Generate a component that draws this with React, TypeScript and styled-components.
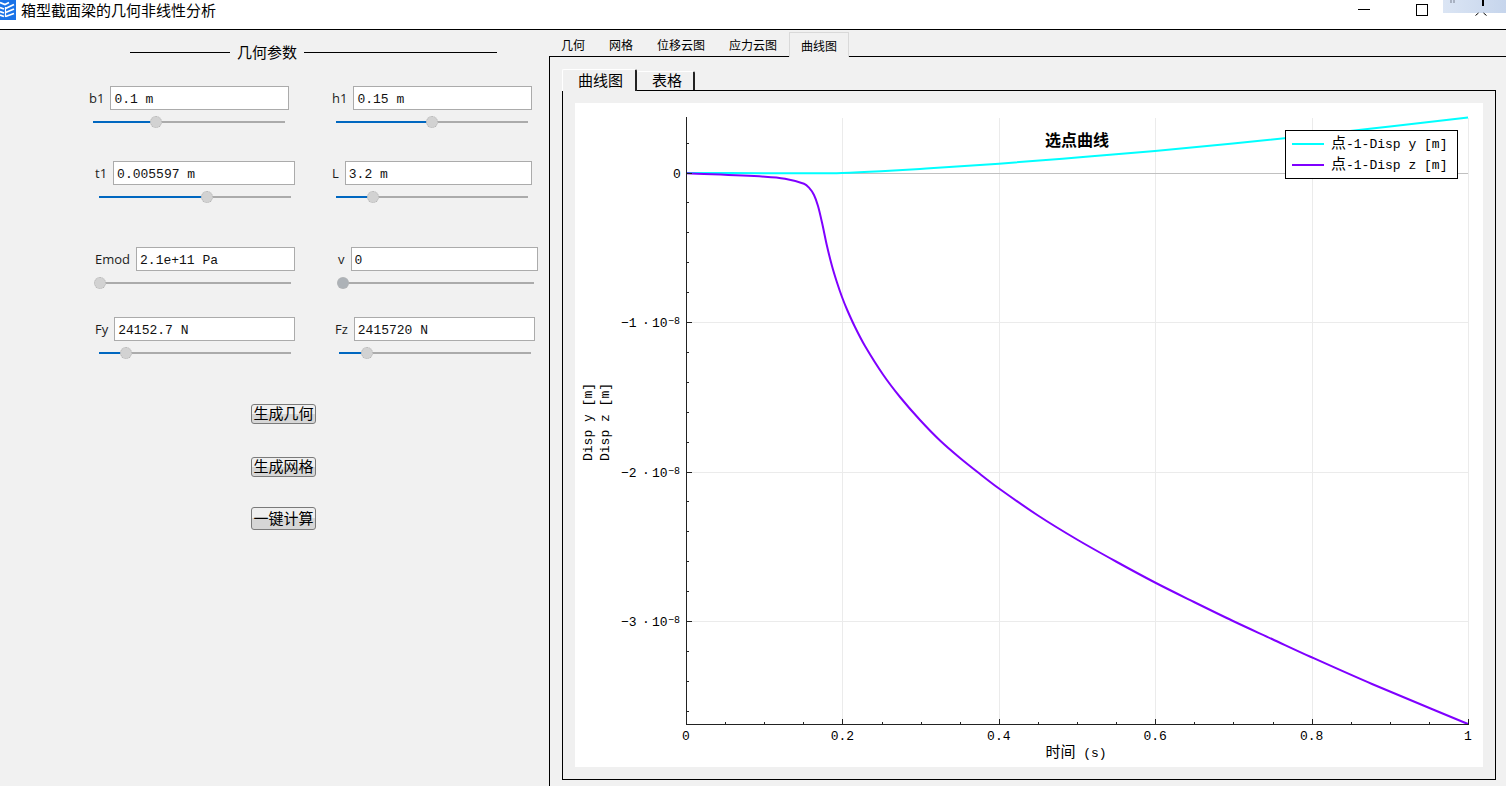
import React, { useState } from 'react';
import styled, { createGlobalStyle, css } from 'styled-components';

const CJK = '"Noto Sans CJK SC", sans-serif';
const MONO = '"Liberation Mono", "Noto Sans CJK SC", monospace';

const GlobalStyle = createGlobalStyle`
  *, *::before, *::after { box-sizing: border-box; }
  body { margin: 0; background: #f1f1f1; color: #000; font-family: ${CJK}; font-size: 15px; }
  button { font: inherit; color: inherit; }
`;

const Window = styled.div`
  min-height: 100vh;
  display: flex;
  flex-direction: column;
`;

const TitleBar = styled.header`
  height: 30px;
  flex: none;
  display: flex;
  align-items: flex-start;
  background: #fff;
  border-bottom: 1px solid #000;
`;

const Logo = styled.svg`
  display: block;
  width: 16px;
  height: 20px;
`;

const Title = styled.h1`
  margin: 0 auto 0 5px;
  font-size: 15px;
  line-height: 20px;
  font-weight: 400;
`;

const WindowButton = styled.button<{ $wide?: boolean; $spaced?: boolean }>`
  width: ${(p) => (p.$wide ? 63 : 42)}px;
  height: 20px;
  margin: ${(p) => (p.$spaced ? '0 16px 0 0' : '0')};
  padding: 0;
  border: 0;
  background: none;
  display: flex;
  justify-content: center;
`;

const Body = styled.div`
  flex: 1;
  display: grid;
  grid-template-columns: 549px minmax(0, 1fr);
`;

const ParameterPane = styled.section`
  padding-top: 12px;
`;

const GroupTitle = styled.h2`
  margin: 0 52px 24px 130px;
  display: flex;
  align-items: center;
  gap: 7px;
  font-size: 15px;
  line-height: 20px;
  font-weight: 400;

  &::before, &::after {
    content: '';
    height: 1px;
    background: #000;
  }
  &::before { width: 100px; }
  &::after { flex: 1; }
`;

const FieldRow = styled.div<{ $start: number; $gap: number; $after: number }>`
  display: flex;
  padding-left: ${(p) => p.$start}px;
  gap: ${(p) => p.$gap}px;
  margin-bottom: ${(p) => p.$after}px;
`;

const Field = styled.div`
  width: 200px;
`;

const FieldLine = styled.div`
  display: flex;
  align-items: center;
  gap: 6px;
  height: 24px;
  margin-bottom: 6px;
`;

const FieldLabel = styled.label`
  font-family: "Open Sans", sans-serif;
  font-size: 13px;
  line-height: 24px;
  color: #1c1c1c;
`;

const ValueInput = styled.input`
  flex: 1;
  min-width: 0;
  height: 24px;
  padding: 2px 3px 0;
  border: 1px solid #ababab;
  border-radius: 0;
  background: #fff;
  color: #111;
  font-family: ${MONO};
  font-size: 13px;
  outline: 0;
`;

const thumb = css<{ $thumb: string }>`
  appearance: none;
  width: 12px;
  height: 12px;
  border: 1px dotted #b4b4b4;
  border-radius: 50%;
  background: ${(p) => p.$thumb};
`;

const Slider = styled.input<{ $thumb: string }>`
  appearance: none;
  display: block;
  width: calc(100% + 4px);
  height: 12px;
  margin: 0 -2px;
  background:
    linear-gradient(#0067c0, #0067c0) 6px 5px / calc((100% - 12px) * var(--fill)) 2px no-repeat,
    linear-gradient(#ababab, #ababab) 6px 5px / calc(100% - 12px) 2px no-repeat;

  &::-webkit-slider-thumb { ${thumb} }
`;

const Actions = styled.div`
  display: flex;
  flex-direction: column;
  align-items: flex-start;
  padding-left: 251px;
`;

const ActionButton = styled.button<{ $tall?: boolean; $after?: number }>`
  width: 65px;
  height: ${(p) => (p.$tall ? 23 : 20)}px;
  margin: 0 0 ${(p) => p.$after ?? 0}px;
  padding: 0 1px 2px;
  border: 1px solid #7a7a7a;
  border-radius: 3px;
  background: linear-gradient(#efefef 0 50%, #d6d6d6 50% 100%);
  font-size: 15px;
  line-height: 16px;
  white-space: nowrap;
`;

const ResultPane = styled.section`
  display: flex;
  flex-direction: column;
  min-width: 0;
`;

const ViewTabs = styled.div`
  display: flex;
  align-items: flex-end;
  height: 26px;
`;

const ViewTab = styled.button<{ $active?: boolean }>`
  height: 24px;
  padding: 1px 12px 0;
  border: 0 solid #d9d9d9;
  background: #f1f1f1;
  font-size: 12px;
  line-height: 23px;
  ${(p) => p.$active && css`
    height: 25px;
    margin-bottom: -1px;
    padding: 0 11px;
    border-width: 1px 1px 0;
    position: relative;
  `}
`;

const ViewFrame = styled.div`
  flex: 1;
  padding: 12px 10px 6px 12px;
  border: 1px solid #000;
  border-width: 1px 0 0 1px;
`;

const PlotTabs = styled.div`
  display: flex;
  align-items: flex-end;
  height: 21px;
`;

const PlotTab = styled.button<{ $active?: boolean }>`
  height: 19px;
  padding: 0 11px 2px 15px;
  border: 1px solid #fff;
  border-left-width: 0;
  border-right: 2px solid #222;
  border-bottom: 0;
  border-radius: 2px 2px 0 0;
  background: #f0f0f0;
  font-size: 15px;
  line-height: 16px;
  ${(p) => p.$active && css`
    height: 22px;
    margin-bottom: -1px;
    padding: 0 12px 2px 15px;
    border-left-width: 1px;
    position: relative;
  `}
`;

const PlotFrame = styled.div`
  padding: 12px;
  border: 1px solid #000;
  background: #f0f0f0;
`;

const Plot = styled.svg`
  display: block;
  width: 100%;
  height: auto;
  background: #fff;
  font-family: ${MONO};
  font-size: 13px;
`;

interface Param {
  id: string;
  value: string;
  level: number;
  thumb?: string;
}

interface ParamRow {
  start: number;
  gap: number;
  after: number;
  params: Param[];
}

/* Slider levels are per mille of the track */
const ROWS: ParamRow[] = [
  { start: 89, gap: 43, after: 33, params: [{ id: 'b1', value: '0.1 m', level: 328 }, { id: 'h1', value: '0.15 m', level: 500 }] },
  { start: 95, gap: 37, after: 44, params: [{ id: 't1', value: '0.005597 m', level: 562 }, { id: 'L', value: '3.2 m', level: 195 }] },
  { start: 95, gap: 43, after: 28, params: [{ id: 'Emod', value: '2.1e+11 Pa', level: 5 }, { id: 'v', value: '0', level: 5, thumb: '#adb2b7' }] },
  { start: 95, gap: 40, after: 45, params: [{ id: 'Fy', value: '24152.7 N', level: 140 }, { id: 'Fz', value: '2415720 N', level: 145 }] },
];

function ParamField({ id, value, level, thumb: color = '#d2d2d2' }: Param) {
  const [text, setText] = useState(value);
  const [pos, setPos] = useState(level);
  return (
    <Field>
      <FieldLine>
        <FieldLabel htmlFor={id}>{id}</FieldLabel>
        <ValueInput id={id} value={text} onChange={(e) => setText(e.target.value)} />
      </FieldLine>
      <Slider
        type="range"
        aria-label={id}
        min={0}
        max={1000}
        value={pos}
        $thumb={color}
        style={{ '--fill': pos / 1000 } as React.CSSProperties}
        onChange={(e) => setPos(Number(e.target.value))}
      />
    </Field>
  );
}

/* Plot geometry, in the units of the plot's viewBox */
const LEFT = 111;
const RIGHT = 893;
const TOP = 14;
const BOTTOM = 621;
const ZERO = 70;
const X_STEP = (RIGHT - LEFT) / 5;
const Y_STEP = 149.5;

const X_LABELS = ['0', '0.2', '0.4', '0.6', '0.8', '1'];

type Point = [number, number];

const DISP_Y: Point[] = [
  [111, 70], [240, 70.3], [267, 70], [306, 68.3], [345, 66], [424, 60.7], [502, 54.5],
  [580, 48], [658, 40.5], [736, 32.5], [815, 23.5], [893, 14.5],
];

const DISP_Z: Point[] = [
  [111, 70.3], [190, 73.7], [210, 75.7], [229, 80.7], [234, 84.7], [239, 92], [243, 103],
  [247, 119.5], [252, 143], [257, 163], [262, 179.5], [267, 194], [272, 206.5], [280, 224],
  [290, 243], [308, 271.5], [325, 294], [345, 317], [365, 337.5], [385, 355], [405, 371], [424, 385.5],
  [463, 412.5], [502, 436.5], [541, 458.5], [580, 479.5], [619, 499], [658, 518], [697, 536],
  [736, 554], [797, 581], [893, 621],
];

/* Cubic path that passes smoothly through every sample */
function toPath(data: Point[]) {
  let d = `M${data[0][0]} ${data[0][1]}`;
  for (let i = 0; i < data.length - 1; i += 1) {
    const a = data[Math.max(i - 1, 0)];
    const b = data[i];
    const c = data[i + 1];
    const e = data[Math.min(i + 2, data.length - 1)];
    const w = c[0] - b[0];
    const slopeB = (c[1] - a[1]) / (c[0] - a[0]);
    const slopeC = (e[1] - b[1]) / (e[0] - b[0]);
    d += ` C${b[0] + w / 3} ${b[1] + (slopeB * w) / 3} ${c[0] - w / 3} ${c[1] - (slopeC * w) / 3} ${c[0]} ${c[1]}`;
  }
  return d;
}

function CurvePlot() {
  const minorX = Array.from({ length: 21 }, (_, i) => i);
  const minorY = Array.from({ length: 20 }, (_, i) => i - 1);
  return (
    <Plot viewBox="0 0 908 664" role="img" aria-label="选点曲线">
      <g shapeRendering="crispEdges" stroke="#ebebeb">
        {[1, 2, 3, 4, 5].map((i) => {
          const x = Math.round(LEFT + i * X_STEP) + 0.5;
          return <line key={i} x1={x} x2={x} y1={TOP + 1} y2={BOTTOM} />;
        })}
        {[1, 2, 3].map((i) => {
          const y = Math.floor(ZERO + i * Y_STEP) + 0.5;
          return <line key={i} x1={LEFT} x2={RIGHT} y1={y} y2={y} />;
        })}
        <line x1={LEFT} x2={RIGHT} y1={ZERO + 0.5} y2={ZERO + 0.5} stroke="#c0c0c0" />
      </g>
      <g fill="none" strokeWidth="2" strokeLinejoin="round">
        <path d={toPath(DISP_Y)} stroke="#00ffff" />
        <path d={toPath(DISP_Z)} stroke="#7f00ff" />
      </g>
      <g shapeRendering="crispEdges" stroke="#222">
        <line x1={LEFT + 0.5} x2={LEFT + 0.5} y1={TOP} y2={BOTTOM + 1} />
        <line x1={LEFT} x2={RIGHT + 1} y1={BOTTOM + 0.5} y2={BOTTOM + 0.5} />
        {minorX.map((i) => {
          const x = Math.round(LEFT + (i * X_STEP) / 4) + 0.5;
          return <line key={i} x1={x} x2={x} y1={BOTTOM - (i % 4 ? 2 : 5)} y2={BOTTOM} />;
        })}
        {minorY.map((i) => {
          const y = Math.floor(ZERO + (i * Y_STEP) / 5) + 0.5;
          return <line key={i} x1={LEFT} x2={LEFT + (i % 5 ? 3 : 6)} y1={y} y2={y} />;
        })}
      </g>
      <g textAnchor="middle">
        {X_LABELS.map((label, i) => (
          <text key={label} x={LEFT + i * X_STEP} y="637">{label}</text>
        ))}
        <text x="502" y="43" fontFamily={CJK} fontSize="16" fontWeight="700">选点曲线</text>
        <text x="501" y="654"><tspan fontSize="15">时间</tspan> (s)</text>
        <text transform="translate(17 319) rotate(-90)">Disp y [m]</text>
        <text transform="translate(34 319) rotate(-90)">Disp z [m]</text>
      </g>
      <text x="98" y="75">0</text>
      {[1, 2, 3].map((i) => {
        const y = Math.floor(ZERO + i * Y_STEP) + 5;
        return (
          <text key={i} y={y}>
            <tspan x="46">−{i}</tspan>
            <tspan x="67">·</tspan>
            <tspan x="77">10</tspan>
            <tspan x="93" dy="-3" fontSize="10">−8</tspan>
          </text>
        );
      })}
      <rect x="710.5" y="27.5" width="172" height="48" fill="#fff" stroke="#000" />
      <line x1="717" x2="749" y1="41" y2="41" stroke="#00ffff" strokeWidth="2" />
      <line x1="717" x2="749" y1="62" y2="62" stroke="#7f00ff" strokeWidth="2" />
      <text x="756" y="45"><tspan fontSize="15">点</tspan>-1-Disp y [m]</text>
      <text x="756" y="66"><tspan fontSize="15">点</tspan>-1-Disp z [m]</text>
    </Plot>
  );
}

const VIEW_TABS = ['几何', '网格', '位移云图', '应力云图', '曲线图'];

export default function App() {
  return (
    <>
      <GlobalStyle />
      <Window>
        <TitleBar>
          <Logo viewBox="0 0 16 20" aria-hidden="true">
            <rect width="16" height="20" fill="#1a73e8" />
            <g fill="none" stroke="#fff" strokeWidth="1.8">
              <path d="M0 2.500 5 4.500 9 2.500M0 7.500 4 9M0 11.500 4 13M0 15 4 16.500" />
              <path d="M5.500 8.500 14 4.500M5.500 12.500 14 9M5.500 16.500 14 13.500" />
              <path d="M5.500 7v10" strokeWidth="1.200" />
            </g>
          </Logo>
          <Title>箱型截面梁的几何非线性分析</Title>
          <WindowButton $spaced aria-label="最小化">
            <svg width="12" height="20" aria-hidden="true"><rect y="9" width="12" height="1" /></svg>
          </WindowButton>
          <WindowButton aria-label="最大化">
            <svg width="12" height="20" aria-hidden="true">
              <rect x="0.5" y="4.500" width="11" height="11" fill="none" stroke="#000" />
            </svg>
          </WindowButton>
          <WindowButton $wide aria-label="关闭">
            <svg width="63" height="20" aria-hidden="true">
              <defs>
                <linearGradient id="glass">
                  <stop offset="0" stopColor="#dbe5f4" />
                  <stop offset="1" stopColor="#c6d5ec" />
                </linearGradient>
              </defs>
              <rect width="63" height="13" fill="url(#glass)" />
              <path d="M8 0v3M11 0v3" stroke="#a9b2c2" strokeWidth="2" />
              <path d="M40 0v6" stroke="#000" strokeWidth="2" />
              <path d="M32.500 15.500l3-2.500M43.500 15.500l-3-2.500" stroke="#000" />
            </svg>
          </WindowButton>
        </TitleBar>
        <Body>
          <ParameterPane>
            <GroupTitle>几何参数</GroupTitle>
            {ROWS.map((row) => (
              <FieldRow key={row.params[0].id} $start={row.start} $gap={row.gap} $after={row.after}>
                {row.params.map((param) => <ParamField key={param.id} {...param} />)}
              </FieldRow>
            ))}
            <Actions>
              <ActionButton $after={33}>生成几何</ActionButton>
              <ActionButton $after={30}>生成网格</ActionButton>
              <ActionButton $tall>一键计算</ActionButton>
            </Actions>
          </ParameterPane>
          <ResultPane>
            <ViewTabs role="tablist">
              {VIEW_TABS.map((name) => (
                <ViewTab key={name} role="tab" aria-selected={name === '曲线图'} $active={name === '曲线图'}>{name}</ViewTab>
              ))}
            </ViewTabs>
            <ViewFrame>
              <PlotTabs role="tablist">
                <PlotTab role="tab" aria-selected $active>曲线图</PlotTab>
                <PlotTab role="tab" aria-selected={false}>表格</PlotTab>
              </PlotTabs>
              <PlotFrame>
                <CurvePlot />
              </PlotFrame>
            </ViewFrame>
          </ResultPane>
        </Body>
      </Window>
    </>
  );
}
